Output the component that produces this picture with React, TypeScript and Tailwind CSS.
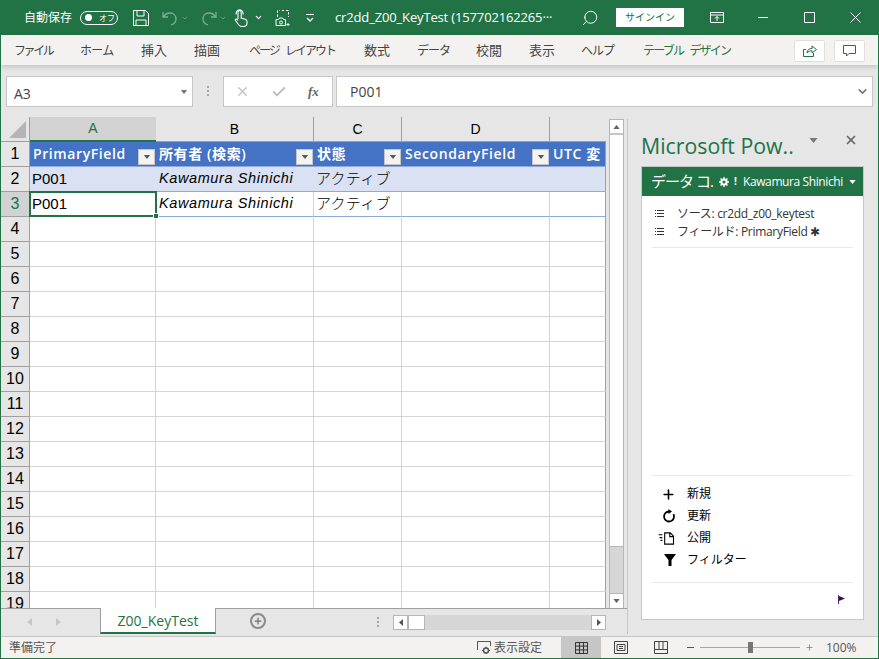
import { ChevronDown, Plus, Search, X, Check } from 'lucide-react';

const ui = 'font-["Open_Sans","Noto_Sans_CJK_JP",sans-serif]';
const cellFont = 'font-["Liberation_Sans","Noto_Sans_CJK_JP",sans-serif]';

const tabs = [
  { label: 'ファイル', cls: 'ml-[13px] w-[38px] text-[12px] tracking-[-2.4px]' },
  { label: 'ホーム', cls: 'ml-[28px] w-[34px] text-[12px] tracking-[-0.7px]' },
  { label: '挿入', cls: 'ml-[27px] w-[26px] text-[13px]' },
  { label: '描画', cls: 'ml-[27px] w-[26px] text-[13px]' },
  { label: 'ページ レイアウト', cls: 'ml-[29px] w-[86px] text-[12px] tracking-[-2px] [word-spacing:5px]' },
  { label: '数式', cls: 'ml-[29px] w-[26px] text-[13px]' },
  { label: 'データ', cls: 'ml-[27px] w-[33px] text-[12px] tracking-[-1px]' },
  { label: '校閲', cls: 'ml-[26px] w-[26px] text-[13px]' },
  { label: '表示', cls: 'ml-[27px] w-[26px] text-[13px]' },
  { label: 'ヘルプ', cls: 'ml-[26px] w-[33px] text-[12px] tracking-[-1px]' },
];

const columns = ['A', 'B', 'C', 'D', ''];
const headers = ['PrimaryField', '所有者 (検索)', '状態', 'SecondaryField', 'UTC 変'];
const rowNumbers = Array.from({ length: 19 }, (_, i) => i + 1);

const Tri = ({ className }: { className: string }) => (
  <svg viewBox="0 0 8 5" className={className} fill="currentColor">
    <path d="M0 0h8L4 5z" />
  </svg>
);

const FilterButton = () => (
  <span className="flex h-[16px] w-[17px] shrink-0 items-center justify-center border border-[#c6c6c6] bg-[#f3f3f3] text-[#595959]">
    <Tri className="h-[4px] w-[8px]" />
  </span>
);

const TitleBar = () => (
  <div className={`flex h-[35px] shrink-0 items-center bg-[#217346] text-white ${ui}`}>
    <span className="ml-[23px] w-[48px] whitespace-nowrap text-[12px]">自動保存</span>
    <span className="ml-[8px] flex h-[14px] w-[38px] items-center rounded-full border border-white pl-[4px]">
      <span className="h-[7px] w-[7px] rounded-full bg-white" />
      <span className="ml-[7px] whitespace-nowrap text-[8px] leading-none">オフ</span>
    </span>
    <svg viewBox="0 0 16 16" className="ml-[15px] h-[16px] w-[16px]" fill="none" stroke="currentColor">
      <path d="M.5.5h12l3 3v12H.5zM4 .5V6h7V.5M3 15.5V10h10v5.5" />
    </svg>
    <svg viewBox="0 0 16 16" className="ml-[13px] h-[16px] w-[16px] text-[#7fae96]" fill="none" stroke="currentColor" strokeWidth="1.3">
      <path d="M1 2v5h5M1.5 7C3 4 5 3 8 3c4 0 6 3 6 6 0 3-2 5-5 6" />
    </svg>
    <ChevronDown className="ml-[3px] h-[8px] w-[8px] text-[#7fae96]" />
    <svg viewBox="0 0 16 16" className="ml-[12px] h-[16px] w-[16px] text-[#7fae96]" fill="none" stroke="currentColor" strokeWidth="1.3">
      <path d="M15 2v5h-5M14.5 7C13 4 11 3 8 3 4 3 2 6 2 9c0 3 2 5 5 6" />
    </svg>
    <ChevronDown className="ml-[2px] h-[8px] w-[8px] text-[#7fae96]" />
    <svg viewBox="0 0 14 18" className="ml-[7px] h-[18px] w-[14px]" fill="none" stroke="currentColor" strokeWidth="1.1">
      <path d="M4 10V3.2a1.6 1.6 0 0 1 3.2 0V9l4 1.2c1 .3 1.8 1 1.8 2.3V14c0 2-1.500 3.500-3.500 3.500H7.500C6 17.500 5 16.500 4 15L1.500 11.500c-.6-1 .6-2 1.500-1.200L4 11.500" />
      <path d="M2.200 5.500A3.800 3.800 0 0 1 5.600.8a3.800 3.800 0 0 1 3.400 4.700" />
    </svg>
    <ChevronDown className="ml-[6px] h-[9px] w-[9px]" strokeWidth={3} />
    <svg viewBox="0 0 16 18" className="ml-[12px] h-[18px] w-[16px]" fill="none" stroke="currentColor">
      <path d="M2.500 8V1.500h2M7 1.500h2M11 1.500h2.500V8" strokeDasharray="2.500 1.500" />
      <path d="M1 10.500h2.500l1-1.500h3l1 1.500h2v6H1z" />
      <circle cx="6" cy="13.500" r="1.500" />
      <path d="M13 14v3M11.500 15.500h3" />
    </svg>
    <svg viewBox="0 0 10 8" className="ml-[14px] h-[8px] w-[10px]" fill="none" stroke="currentColor">
      <path d="M1 .5h8" />
      <path d="M2 4l3 3 3-3" strokeWidth="1.300" />
    </svg>
    <span className="ml-[20px] w-[220px] whitespace-nowrap text-[13px] tracking-[-0.15px]">cr2dd_Z00_KeyTest (157702162265···</span>
    <Search className="ml-[26px] h-[18px] w-[18px] -scale-x-100" strokeWidth={1.300} />
    <span className="ml-[17px] flex h-[19px] w-[68px] items-center justify-center bg-white text-[10px] text-[#217346]">サインイン</span>
    <svg viewBox="0 0 14 11" className="ml-[26px] h-[11px] w-[14px]" fill="none" stroke="currentColor">
      <path d="M.5.5h13v10H.5zM.5 3h13M7 9V4.500M5 6.500l2-2 2 2" />
    </svg>
    <svg viewBox="0 0 10 1" className="ml-[34px] h-px w-[10px]" fill="currentColor">
      <path d="M0 0h10v1H0z" />
    </svg>
    <svg viewBox="0 0 11 11" className="ml-[36px] h-[11px] w-[11px]" fill="none" stroke="currentColor">
      <path d="M.5.5h10v10H.5z" />
    </svg>
    <svg viewBox="0 0 11 11" className="ml-[35px] h-[11px] w-[11px]" fill="none" stroke="currentColor">
      <path d="M.5.5l10 10M10.500.5l-10 10" />
    </svg>
  </div>
);

const RibbonTabs = () => (
  <div className={`z-10 flex h-[30px] shrink-0 items-center bg-[#f3f2f1] pt-px text-[#444444] shadow-[0_2px_5px_rgba(0,0,0,0.15)] ${ui}`}>
    {tabs.map((tab) => (
      <span key={tab.label} className={`${tab.cls} whitespace-nowrap`}>
        {tab.label}
      </span>
    ))}
    <span className="ml-[29px] w-[88px] whitespace-nowrap text-[12px] tracking-[-1.8px] text-[#217346] [word-spacing:5px]">テーブル デザイン</span>
    <span className="ml-[63px] flex h-[22px] w-[31px] items-center justify-center rounded-[2px] border border-[#e1dfdd] bg-white text-[#217346]">
      <svg viewBox="0 0 14 13" className="h-[13px] w-[14px]" fill="none" stroke="currentColor">
        <path d="M3 5.500H.5v7h10V9M4 9c0-3 2-4.500 5-4.500V2l4.500 3.500L9 9V6.800C7 6.800 5 7.500 4 9z" />
      </svg>
    </span>
    <span className="ml-[9px] flex h-[22px] w-[31px] items-center justify-center rounded-[2px] border border-[#e1dfdd] bg-white text-[#217346]">
      <svg viewBox="0 0 13 12" className="h-[12px] w-[13px]" fill="none" stroke="currentColor">
        <path d="M.5.500h12v8H6L3.500 11V8.500H.5z" />
      </svg>
    </span>
  </div>
);

const FormulaBar = () => (
  <div className="flex h-[52px] shrink-0 items-start bg-[#e6e6e6] pl-[5px] pt-[11px]">
    <div className={`flex h-[31px] w-[187px] items-center justify-between border border-[#c6c6c6] bg-white pl-[7px] pr-[4px] text-[14px] text-[#444444] ${ui}`}>
      <span className="pt-[3px]">A3</span>
      <Tri className="h-[4px] w-[8px] text-[#777777]" />
    </div>
    <div className="ml-[14px] flex w-[3px] flex-col gap-[2px] pt-[10px]">
      <span className="h-[2px] w-[2px] bg-[#a6a6a6]" />
      <span className="h-[2px] w-[2px] bg-[#a6a6a6]" />
      <span className="h-[2px] w-[2px] bg-[#a6a6a6]" />
    </div>
    <div className="ml-[13px] flex h-[31px] w-[110px] items-center border border-[#c6c6c6] bg-white text-[#bfbfbf]">
      <X className="ml-[11px] h-[15px] w-[15px]" strokeWidth={2} />
      <Check className="ml-[21px] h-[16px] w-[16px]" strokeWidth={3} />
      <span className="ml-[21px] font-['Liberation_Serif',serif] text-[13px] font-bold italic text-[#666666]">fx</span>
    </div>
    <div className={`ml-[3px] flex h-[31px] w-[537px] items-center justify-between border border-[#c6c6c6] bg-white pl-[13px] pr-[3px] text-[14px] text-[#444444] ${ui}`}>
      <span className="-mt-px">P001</span>
      <ChevronDown className="h-[13px] w-[13px] text-[#777777]" strokeWidth={3} />
    </div>
  </div>
);

const Sheet = () => (
  <div className={`relative min-h-0 flex-1 overflow-hidden ${cellFont}`}>
    <div className="grid grid-cols-[29px_126px_158px_88px_148px_56px] grid-rows-[25px_25px_25px_25px] auto-rows-[25px] text-[15px] text-black">
      <div className="flex items-end justify-end border-b border-r border-[#9f9f9f] bg-[#e6e6e6] p-[3px]">
        <svg viewBox="0 0 17 17" className="h-[17px] w-[17px] text-[#b5b5b5]" fill="currentColor">
          <path d="M17 0v17H0z" />
        </svg>
      </div>
      {columns.map((c, i) => (
        <div
          key={i}
          className={
            i === 0
              ? 'flex items-center justify-center border-b-2 border-[#217346] bg-[#d2d2d2] text-[14px] text-[#217346]'
              : i === 4
                ? 'flex items-center justify-center border-b border-[#9f9f9f] bg-[#e6e6e6] text-[14px]'
                : 'flex items-center justify-center border-b border-r border-[#9f9f9f] bg-[#e6e6e6] text-[14px]'
          }
        >
          {c}
        </div>
      ))}
      {rowNumbers.map((n) => (
        <div key={n} className="contents">
          <div
            className={
              n === 3
                ? 'flex items-center justify-center border-b border-r border-[#9f9f9f] bg-[#d2d2d2] text-[16px] text-[#217346]'
                : 'flex items-center justify-center border-b border-r border-[#9f9f9f] bg-[#e6e6e6] text-[16px]'
            }
          >
            {n}
          </div>
          {columns.map((_, i) => {
            if (n === 1) {
              return (
                <div
                  key={i}
                  className={
                    i === 4
                      ? 'flex items-end overflow-hidden border-b border-r border-b-[#8ea9db] border-r-[#9f9f9f] bg-[#4472c4] pb-[1px] pl-[3px] font-["Open_Sans","Noto_Sans_CJK_JP",sans-serif] text-[14px] font-semibold leading-[22px] tracking-[0.6px] text-white'
                      : 'flex items-end justify-between overflow-hidden border-b border-[#8ea9db] bg-[#4472c4] pb-[1px] pl-[3px] pr-[1px] font-["Open_Sans","Noto_Sans_CJK_JP",sans-serif] text-[14px] font-semibold leading-[22px] tracking-[0.6px] text-white'
                  }
                >
                  <span className="whitespace-nowrap">{headers[i]}</span>
                  {i < 4 && <FilterButton />}
                </div>
              );
            }
            if (n === 2 || n === 3) {
              const text = i === 0 ? 'P001' : i === 1 ? 'Kawamura Shinichi' : i === 2 ? 'アクティブ' : '';
              return (
                <div
                  key={i}
                  className={
                    n === 2
                      ? i === 4
                        ? 'flex items-center whitespace-nowrap border-b border-r border-b-[#8ea9db] border-r-[#9f9f9f] bg-[#d9e1f2] pl-[2px]'
                        : 'flex items-center whitespace-nowrap border-b border-[#8ea9db] bg-[#d9e1f2] pl-[2px]'
                      : i === 4
                        ? 'flex items-center whitespace-nowrap border-b border-r border-b-[#8ea9db] border-r-[#9f9f9f] bg-white pl-[2px]'
                        : 'flex items-center whitespace-nowrap border-b border-r border-b-[#8ea9db] border-r-[#d4d4d4] bg-white pl-[2px]'
                  }
                >
                  <span className={i === 1 ? 'pl-px text-[14.500px] italic tracking-[0.6px]' : i === 2 ? 'font-light tracking-[0.3px]' : ''}>{text}</span>
                </div>
              );
            }
            return (
              <div
                key={i}
                className={
                  i === 4
                    ? 'border-b border-r border-b-[#d4d4d4] border-r-[#9f9f9f] bg-white'
                    : 'border-b border-r border-[#d4d4d4] bg-white'
                }
              />
            );
          })}
        </div>
      ))}
    </div>
    <div className="absolute left-[28px] top-[74px] h-[26px] w-[128px] border-2 border-[#217346]">
      <span className="absolute -bottom-[4px] -right-[4px] h-[6px] w-[6px] border border-white bg-[#217346]" />
    </div>
  </div>
);

const VerticalScroll = () => (
  <div className="ml-[3px] mt-[2px] flex h-[490px] w-[15px] flex-col border border-[#b5b5b5] bg-[#d6d6d6]">
    <div className="flex h-[15px] shrink-0 items-center justify-center border-b-2 border-[#c6c6c6] bg-white text-[#666666]">
      <Tri className="h-[4px] w-[7px] rotate-180" />
    </div>
    <div className="h-[412px] shrink-0 border-b border-[#b5b5b5] bg-white" />
    <div className="flex-1" />
    <div className="flex h-[15px] shrink-0 items-center justify-center border-t border-[#b5b5b5] bg-white text-[#666666]">
      <Tri className="h-[4px] w-[7px]" />
    </div>
  </div>
);

const SheetTabs = () => (
  <div className={`flex h-[28px] shrink-0 items-start border-t border-[#9f9f9f] bg-[#e6e6e6] ${ui}`}>
    <svg viewBox="0 0 5 8" className="ml-[26px] mt-[9px] h-[8px] w-[5px] text-[#c6c6c6]" fill="currentColor">
      <path d="M5 0v8L0 4z" />
    </svg>
    <svg viewBox="0 0 5 8" className="ml-[24px] mt-[9px] h-[8px] w-[5px] text-[#c6c6c6]" fill="currentColor">
      <path d="M0 0v8l5-4z" />
    </svg>
    <div className="-mt-px ml-[39px] flex h-[26px] w-[116px] items-center justify-center border-x border-b-2 border-x-[#9f9f9f] border-b-[#217346] bg-white text-[14px] text-[#217346]">
      Z00_KeyTest
    </div>
    <span className="ml-[34px] mt-[4px] flex h-[16px] w-[16px] items-center justify-center rounded-full border-2 border-[#8a8a8a] text-[#6f6f6f]">
      <Plus className="h-[10px] w-[10px]" strokeWidth={3} />
    </span>
    <div className="ml-[111px] mt-[8px] flex flex-col gap-[2px]">
      <span className="h-[2px] w-[2px] bg-[#a6a6a6]" />
      <span className="h-[2px] w-[2px] bg-[#a6a6a6]" />
      <span className="h-[2px] w-[2px] bg-[#a6a6a6]" />
    </div>
    <div className="ml-[14px] mt-[6px] flex h-[15px] w-[213px] bg-[#d6d6d6]">
      <span className="flex w-[15px] items-center justify-center border border-[#b5b5b5] bg-white text-[#555555]">
        <svg viewBox="0 0 4 7" className="h-[7px] w-[4px]" fill="currentColor">
          <path d="M4 0v7L0 3.500z" />
        </svg>
      </span>
      <span className="w-[17px] border border-[#b5b5b5] bg-white" />
      <span className="flex-1" />
      <span className="flex w-[15px] items-center justify-center border border-[#b5b5b5] bg-white text-[#555555]">
        <svg viewBox="0 0 4 7" className="h-[7px] w-[4px]" fill="currentColor">
          <path d="M0 0v7l4-3.500z" />
        </svg>
      </span>
    </div>
  </div>
);

const ListIcon = () => (
  <svg viewBox="0 0 9 7" className="h-[7px] w-[9px] shrink-0 text-[#333333]" fill="currentColor">
    <path d="M0 0h1v1H0zM2 0h7v1H2zM0 3h1v1H0zM2 3h7v1H2zM0 6h1v1H0zM2 6h7v1H2z" />
  </svg>
);

const actions = [
  {
    label: '新規',
    icon: <Plus className="h-[15px] w-[15px]" strokeWidth={2.500} />,
  },
  {
    label: '更新',
    icon: (
      <svg viewBox="0 0 14 14" className="h-[14px] w-[14px]" fill="none" stroke="currentColor" strokeWidth="1.800">
        <path d="M7 2.500a5 5 0 1 0 4.500 2.700" />
        <path d="M6.500 0v5l3.500-2.500z" fill="currentColor" stroke="none" />
      </svg>
    ),
  },
  {
    label: '公開',
    icon: (
      <svg viewBox="0 0 18 14" className="h-[13px] w-[18px]" fill="none" stroke="currentColor" strokeWidth="1.200">
        <path d="M0 3h4M1 6h3M2 9h2" />
        <path d="M6.500 1h6l3.500 3.500V13H6.500zM12 1v4h4" />
      </svg>
    ),
  },
  {
    label: 'フィルター',
    icon: (
      <svg viewBox="0 0 12 12" className="h-[12px] w-[12px]" fill="currentColor">
        <path d="M0 0h12L7.500 6v6h-3V6z" />
      </svg>
    ),
  },
];

const Pane = () => (
  <div className={`mt-[2px] flex h-[515px] min-w-0 flex-1 flex-col border-l border-[#c6c6c6] bg-[#e6e6e6] pl-[13px] ${ui}`}>
    <div className="flex h-[47px] shrink-0 items-center">
      <span className="w-[160px] whitespace-nowrap pt-[6px] text-[21.300px] text-[#217346]">Microsoft Pow..</span>
      <Tri className="ml-[8px] mt-[-5px] h-[5px] w-[9px] text-[#777777]" />
      <X className="ml-[26px] mt-[-5px] h-[14px] w-[14px] text-[#666666]" strokeWidth={3} />
    </div>
    <div className="flex h-[454px] w-[223px] flex-col border border-[#c6c6c6] bg-white">
      <div className="flex h-[29px] shrink-0 items-center whitespace-nowrap bg-[#217346] pl-[9px] text-white">
        <span className="w-[61px] text-[15px] tracking-[-1px]">データ コ.</span>
        <svg viewBox="0 0 10 10" className="ml-[7px] h-[10px] w-[10px]" fill="none" stroke="currentColor">
          <circle cx="5" cy="5" r="2.600" strokeWidth="2" />
          <path d="M5 0v2M5 8v2M0 5h2M8 5h2M1.500 1.500l1.300 1.300M7.200 7.200l1.300 1.300M8.500 1.500L7.200 2.800M2.800 7.200L1.500 8.500" strokeWidth="1.400" />
        </svg>
        <span className="ml-[5px] w-[9px] text-[10px] font-bold">!</span>
        <span className="text-[12px] tracking-[-0.4px]">Kawamura Shinichi</span>
        <Tri className="ml-[6px] h-[4px] w-[7px]" />
      </div>
      <div className="mx-[10px] flex h-[52px] shrink-0 flex-col gap-[3px] border-b border-[#e8e8e8] pl-[3px] pt-[10px] text-[12px] leading-[15px] text-[#333333]">
        <div className="flex items-center whitespace-nowrap">
          <ListIcon />
          <span className="ml-[13px] tracking-[-0.3px]">ソース: cr2dd_z00_keytest</span>
        </div>
        <div className="flex items-center whitespace-nowrap">
          <ListIcon />
          <span className="ml-[13px] tracking-[-0.3px]">フィールド: PrimaryField ✱</span>
        </div>
      </div>
      <div className="min-h-0 flex-1" />
      <div className="mx-[10px] flex h-[108px] shrink-0 flex-col gap-[2px] border-y border-[#e8e8e8] pt-[8px] text-[12px] text-black">
        {actions.map((a) => (
          <div key={a.label} className="flex h-[20px] items-center">
            <span className="flex w-[35px] shrink-0 items-center justify-end pr-[11px]">{a.icon}</span>
            <span className="whitespace-nowrap">{a.label}</span>
          </div>
        ))}
      </div>
      <div className="flex h-[36px] shrink-0 justify-end pr-[18px] pt-[12px]">
        <svg viewBox="0 0 7 9" className="h-[9px] w-[7px]">
          <path d="M0 0h1v9H0z" fill="#68217a" />
          <path d="M1 1l6 2.500-6 2.500z" fill="#1f1f1f" />
        </svg>
      </div>
    </div>
  </div>
);

const StatusBar = () => (
  <div className={`flex h-[22px] shrink-0 items-center border-t border-[#c6c6c6] bg-[#f3f2f1] text-[12px] text-[#555555] ${ui}`}>
    <span className="ml-[8px] w-[48px] whitespace-nowrap">準備完了</span>
    <svg viewBox="0 0 14 13" className="ml-[420px] h-[13px] w-[14px]" fill="none" stroke="currentColor">
      <path d="M.5 9V.5h13V5" />
      <circle cx="9" cy="9.500" r="2.500" strokeWidth="1.500" />
      <path d="M9 5.500v1.500M9 12v1.500M5 9.500h1.500M11.500 9.500H13" />
    </svg>
    <span className="ml-[3px] w-[48px] whitespace-nowrap">表示設定</span>
    <span className="ml-[19px] flex h-[21px] w-[40px] items-center justify-center bg-[#c6c6c6]">
      <svg viewBox="0 0 13 12" className="h-[12px] w-[13px]" fill="none" stroke="#333333">
        <path d="M.5.500h12v11H.5zM4.500.500v11M8.500.500v11M.5 4.100h12M.5 7.900h12" />
      </svg>
    </span>
    <svg viewBox="0 0 14 13" className="ml-[13px] h-[13px] w-[14px]" fill="none" stroke="#444444">
      <path d="M.5.500h13v12H.5zM3 3.500h8v6H3zM5 5.500h4M5 7.500h4" />
    </svg>
    <svg viewBox="0 0 14 13" className="ml-[26px] h-[13px] w-[14px]" fill="none" stroke="#444444">
      <path d="M.5.500h13v12H.5zM.5 8.500h13M5 .500v8M9 .500v8" />
    </svg>
    <span className="ml-[19px] h-px w-[7px] bg-[#555555]" />
    <span className="relative ml-[6px] flex h-[10px] w-[100px] items-center">
      <span className="h-px w-full bg-[#a6a6a6]" />
      <span className="absolute left-[48px] h-[11px] w-[5px] bg-[#777777]" />
    </span>
    <Plus className="ml-[5px] h-[9px] w-[9px]" strokeWidth={1.500} />
    <span className="ml-[12px] whitespace-nowrap">100%</span>
  </div>
);

export default function App() {
  return (
    <div className="flex h-[659px] w-[879px] flex-col overflow-hidden border-x border-b border-[#217346] bg-[#e6e6e6]">
      <TitleBar />
      <RibbonTabs />
      <FormulaBar />
      <div className="flex min-h-0 flex-1">
        <div className="flex w-[626px] shrink-0 flex-col">
          <div className="flex min-h-0 flex-1">
            <div className="flex w-[605px] shrink-0 flex-col">
              <Sheet />
            </div>
            <VerticalScroll />
          </div>
          <SheetTabs />
        </div>
        <Pane />
      </div>
      <StatusBar />
    </div>
  );
}
